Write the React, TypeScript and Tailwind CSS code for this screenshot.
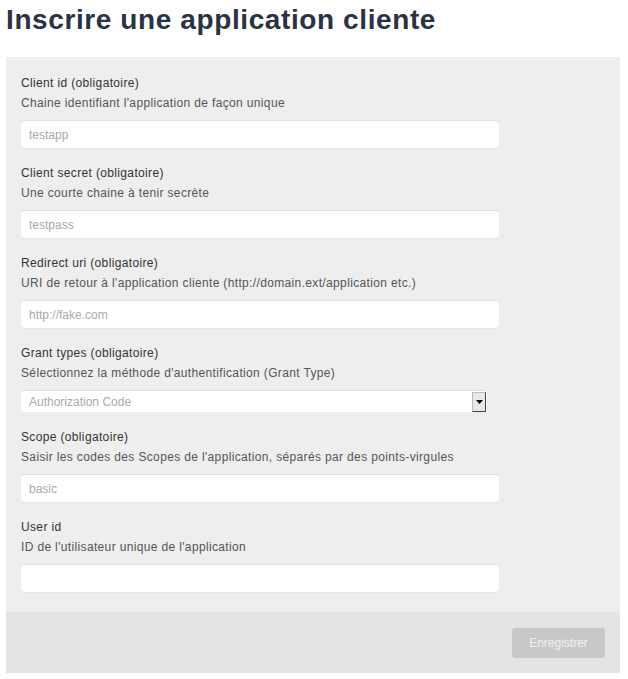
const fields = [
  {
    label: "Client id (obligatoire)",
    help: "Chaine identifiant l'application de façon unique",
    placeholder: "testapp",
  },
  {
    label: "Client secret (obligatoire)",
    help: "Une courte chaine à tenir secrète",
    placeholder: "testpass",
  },
  {
    label: "Redirect uri (obligatoire)",
    help: "URI de retour à l'application cliente (http://domain.ext/application etc.)",
    placeholder: "http://fake.com",
  },
];

const fieldsAfter = [
  {
    label: "Scope (obligatoire)",
    help: "Saisir les codes des Scopes de l'application, séparés par des points-virgules",
    placeholder: "basic",
  },
  {
    label: "User id",
    help: "ID de l'utilisateur unique de l'application",
    placeholder: "",
  },
];

type Field = { label: string; help: string; placeholder: string };

function TextField({ field }: { field: Field }) {
  return (
    <div className="flex flex-col">
      <label className="h-5 text-[12px] leading-5 tracking-[0.35px] text-[#333]">{field.label}</label>
      <span className="h-5 text-[12px] leading-5 tracking-[0.35px] text-[#555]">{field.help}</span>
      <input
        type="text"
        placeholder={field.placeholder}
        className="mt-[7px] h-[28px] w-[478px] rounded-[4px] border-t border-[#e0e0e0] bg-white px-2 text-[12px] text-[#333] outline-none placeholder:text-[#aaa] shadow-[0_1px_0_#e6e6e6]"
      />
    </div>
  );
}

export default function App() {
  return (
    <div className="min-h-[679px] bg-white font-['Liberation_Sans',Arial,sans-serif]">
      <h1 className="pl-[6px] pt-[2px] text-[28px] font-bold leading-[36px] tracking-[0.6px] text-[#2a3344]">
        Inscrire une application cliente
      </h1>
      <div className="ml-[6px] mt-[19px] w-[614px] bg-[#eeeeee]">
        <div className="flex flex-col gap-[15px] px-[15px] pb-[20px] pt-[16px]">
          {fields.map((f) => (
            <TextField key={f.label} field={f} />
          ))}
          {/* Grant type select */}
          <div className="flex flex-col">
            <label className="h-5 text-[12px] leading-5 tracking-[0.35px] text-[#333]">Grant types (obligatoire)</label>
            <span className="h-5 text-[12px] leading-5 tracking-[0.35px] text-[#555]">
              Sélectionnez la méthode d'authentification (Grant Type)
            </span>
            <div className="mt-[7px] flex h-[22px] w-[466px] items-center rounded-[3px] border-t border-[#e0e0e0] bg-white">
              <span className="flex-1 px-2 text-[12px] text-[#aaa]">Authorization Code</span>
              <div className="mr-[1px] flex h-[20px] w-[14px] items-center justify-center border border-[#bbb] border-r-[#444] border-b-[#444] bg-[#e8e8e8]">
                <svg width="7" height="4" viewBox="0 0 7 4">
                  <path d="M0 0h7L3.5 4z" fill="#000" />
                </svg>
              </div>
            </div>
          </div>
          {fieldsAfter.map((f) => (
            <TextField key={f.label} field={f} />
          ))}
        </div>
        <div className="flex h-[61px] items-center justify-end border-t border-[#e2e2e2] bg-[#e4e4e4] pr-[15px]">
          <button className="h-[30px] w-[93px] rounded-[3px] bg-[#c8c8c8] text-[12px] text-[#f2f2f2]">
            Enregistrer
          </button>
        </div>
      </div>
    </div>
  );
}
